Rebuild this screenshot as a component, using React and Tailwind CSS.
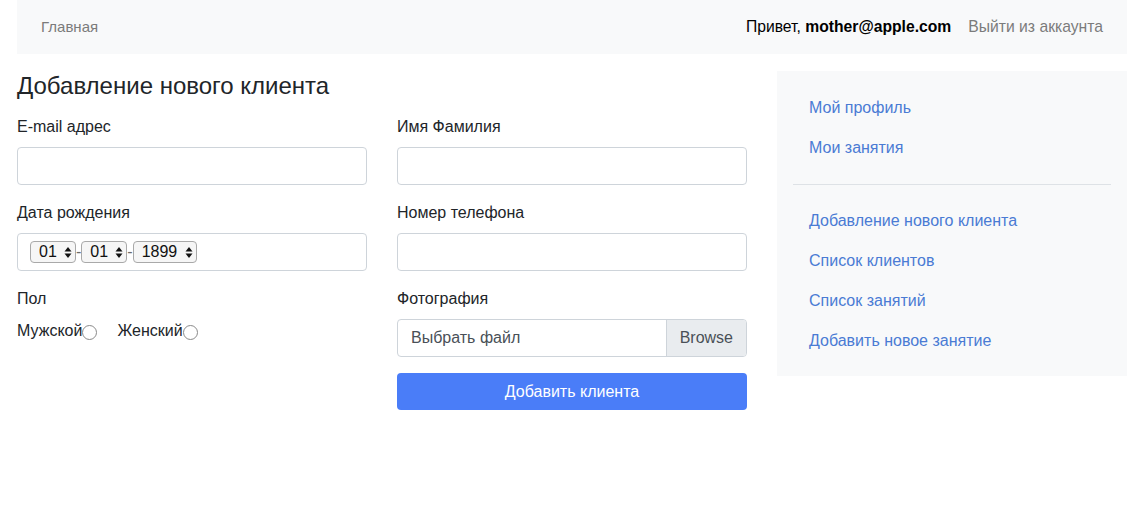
const font = { fontFamily: '"Liberation Sans", Arial, sans-serif' };

function Field({ label, children }) {
  return (
    <div className="mb-4">
      <label className="block mb-2 text-[16px] leading-6 text-[#212529]">{label}</label>
      {children}
    </div>
  );
}

function TextInput() {
  return <div className="h-[38px] rounded-[4px] border border-[#ced4da] bg-white" />;
}

function MiniSelect({ value, w }) {
  return (
    <div className={`flex h-[22px] items-center justify-between rounded-[4px] border border-[#a9a9a9] bg-[#f6f6f6] pl-[8px] pr-[3px] text-[16px] leading-none text-[#111] ${w}`}>
      <span>{value}</span>
      <svg width="8" height="13" viewBox="0 0 8 13" className="ml-[4px] shrink-0">
        <path d="M4 1 L7.5 5.5 H0.5 Z" fill="#111" />
        <path d="M4 12 L7.5 7.5 H0.5 Z" fill="#111" />
      </svg>
    </div>
  );
}

function Radio({ label }) {
  return (
    <span className="flex items-center">
      {label}
      <span className="mt-[3px] inline-block h-[15px] w-[15px] rounded-full border border-[#8a8a8a] bg-white" />
    </span>
  );
}

const links1 = ['Мой профиль', 'Мои занятия'];
const links2 = ['Добавление нового клиента', 'Список клиентов', 'Список занятий', 'Добавить новое занятие'];

export default function App() {
  return (
    <div className="min-h-[524px] bg-white text-[16px] text-[#212529]" style={font}>
      <div className="mx-auto w-[1110px]">
        {/* Navbar */}
        <nav className="flex h-[54px] items-center justify-between bg-[#f8f9fa] px-6 text-[15.7px]">
          <a className="text-[15px] text-[#7b7b7b]">Главная</a>
          <div className="flex items-center gap-[17px]">
            <span className="text-black">
              Привет, <b className="font-bold">mother@apple.com</b>
            </span>
            <a className="text-[#7b7b7b]">Выйти из аккаунта</a>
          </div>
        </nav>

        <div className="mt-[17px] flex gap-[30px]">
          {/* Form */}
          <div className="w-[730px]">
            <h4 className="mb-[14px] text-[24px] leading-[30px] font-normal text-[#212529]">
              Добавление нового клиента
            </h4>
            <div className="grid grid-cols-2 gap-x-[30px]">
              <div>
                <Field label="E-mail адрес">
                  <TextInput />
                </Field>
                <Field label="Дата рождения">
                  <div className="flex h-[38px] items-center rounded-[4px] border border-[#ced4da] bg-white pl-[12px] text-[#6b6b6b]">
                    <MiniSelect value="01" w="w-[46px]" />
                    <span>-</span>
                    <MiniSelect value="01" w="w-[46px]" />
                    <span>-</span>
                    <MiniSelect value="1899" w="w-[64px]" />
                  </div>
                </Field>
                <Field label="Пол">
                  <div className="flex items-center gap-[20px] leading-6">
                    <Radio label="Мужской" />
                    <Radio label="Женский" />
                  </div>
                </Field>
              </div>
              <div>
                <Field label="Имя Фамилия">
                  <TextInput />
                </Field>
                <Field label="Номер телефона">
                  <TextInput />
                </Field>
                <Field label="Фотография">
                  <div className="flex h-[38px] overflow-hidden rounded-[4px] border border-[#ced4da] bg-white">
                    <span className="flex flex-1 items-center px-[13px] text-[#495057]">Выбрать файл</span>
                    <span className="flex items-center border-l border-[#ced4da] bg-[#e9ecef] px-[13px] text-[#495057]">Browse</span>
                  </div>
                </Field>
                <button className="h-[37px] w-full rounded-[4px] bg-[#4a7df8] text-[16px] text-white">
                  Добавить клиента
                </button>
              </div>
            </div>
          </div>

          {/* Sidebar */}
          <div className="h-[305px] w-[350px] bg-[#f8f9fa] px-4 pt-[17px]">
            <div className="flex flex-col">
              {links1.map((t) => (
                <a key={t} className="px-4 leading-[40px] text-[#4a7bd4]">{t}</a>
              ))}
            </div>
            <hr className="my-[16px] border-t border-[#dee2e6]" />
            <div className="flex flex-col">
              {links2.map((t) => (
                <a key={t} className="px-4 leading-[40px] text-[#4a7bd4]">{t}</a>
              ))}
            </div>
          </div>
        </div>
      </div>
    </div>
  );
}
